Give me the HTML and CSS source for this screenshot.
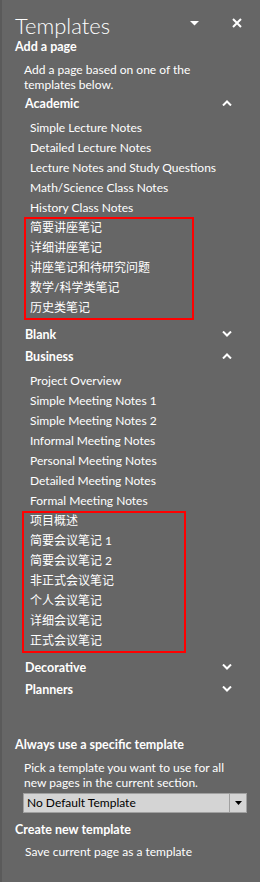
FILE: index.html
```html
<!DOCTYPE html>
<html lang="en">

<head>
    <meta charset="UTF-8">
    <meta name="viewport" content="width=device-width, initial-scale=1.0">
    <title>Templates</title>
    <link rel="stylesheet" href="styles.css">
</head>

<body>

    <div class="pane">
        <div class="pane-header">
            <div class="pane-title">Templates</div>
            <svg class="pane-menu" width="9" height="5" viewBox="0 0 9 5"><path d="M0 0H9L4.5 4.5Z" fill="#fff"/></svg>
            <svg class="pane-close" width="10" height="10" viewBox="0 0 10 10"><path d="M1 1L9 9M9 1L1 9" stroke="#fff" stroke-width="2"/></svg>
        </div>

        <div class="section-title">Add a page</div>
        <p class="section-text">Add a page based on one of the<br>templates below.</p>

        <!-- Academic -->
        <div class="group open">
            <div class="group-head">
                <span>Academic</span>
                <svg class="chevron" width="10" height="6" viewBox="0 0 10 6"><path d="M1 5.5L5 1.5L9 5.5" fill="none" stroke="#fff" stroke-width="2"/></svg>
            </div>
            <div class="group-items">
                <div class="item">Simple Lecture Notes</div>
                <div class="item">Detailed Lecture Notes</div>
                <div class="item">Lecture Notes and Study Questions</div>
                <div class="item">Math/Science Class Notes</div>
                <div class="item">History Class Notes</div>
                <div class="cjk-box box-academic">
                    <div class="item">简要讲座笔记</div>
                    <div class="item">详细讲座笔记</div>
                    <div class="item">讲座笔记和待研究问题</div>
                    <div class="item">数学/科学类笔记</div>
                    <div class="item">历史类笔记</div>
                </div>
            </div>
        </div>

        <div class="group">
            <div class="group-head">
                <span>Blank</span>
                <svg class="chevron" width="10" height="6" viewBox="0 0 10 6"><path d="M1 0.5L5 4.5L9 0.5" fill="none" stroke="#fff" stroke-width="2"/></svg>
            </div>
        </div>

        <!-- Business -->
        <div class="group open">
            <div class="group-head">
                <span>Business</span>
                <svg class="chevron" width="10" height="6" viewBox="0 0 10 6"><path d="M1 5.5L5 1.5L9 5.5" fill="none" stroke="#fff" stroke-width="2"/></svg>
            </div>
            <div class="group-items">
                <div class="item">Project Overview</div>
                <div class="item">Simple Meeting Notes 1</div>
                <div class="item">Simple Meeting Notes 2</div>
                <div class="item">Informal Meeting Notes</div>
                <div class="item">Personal Meeting Notes</div>
                <div class="item">Detailed Meeting Notes</div>
                <div class="item">Formal Meeting Notes</div>
                <div class="cjk-box box-business">
                    <div class="item">项目概述</div>
                    <div class="item">简要会议笔记 1</div>
                    <div class="item">简要会议笔记 2</div>
                    <div class="item">非正式会议笔记</div>
                    <div class="item">个人会议笔记</div>
                    <div class="item">详细会议笔记</div>
                    <div class="item">正式会议笔记</div>
                </div>
            </div>
        </div>

        <div class="group">
            <div class="group-head">
                <span>Decorative</span>
                <svg class="chevron" width="10" height="6" viewBox="0 0 10 6"><path d="M1 0.5L5 4.5L9 0.5" fill="none" stroke="#fff" stroke-width="2"/></svg>
            </div>
        </div>

        <div class="group">
            <div class="group-head">
                <span>Planners</span>
                <svg class="chevron" width="10" height="6" viewBox="0 0 10 6"><path d="M1 0.5L5 4.5L9 0.5" fill="none" stroke="#fff" stroke-width="2"/></svg>
            </div>
        </div>

        <div class="section-title default-title">Always use a specific template</div>
        <p class="section-text">Pick a template you want to use for all<br>new pages in the current section.</p>
        <div class="select">
            <div class="select-value">No Default Template</div>
            <div class="select-arrow">
                <svg width="7" height="4" viewBox="0 0 7 4"><path d="M0 0H7L3.5 4Z" fill="#000"/></svg>
            </div>
        </div>

        <div class="section-title create-title">Create new template</div>
        <div class="save-link">Save current page as a template</div>
    </div>

</body>

</html>
```

FILE: styles.css
```css
body {
    margin: 0;
    padding: 0;
    font-family: 'Lato', 'Noto Sans CJK SC', sans-serif;
    font-size: 12px;
    color: #fff;
    background-color: #666;
}

.pane {
    box-sizing: border-box;
    width: 260px;
    height: 882px;
    background-color: #666;
    border-left: 2px solid #5a5a5a;
}

.pane-header {
    display: flex;
    align-items: flex-start;
    padding: 12px 18px 0 13px;
}

.pane-title {
    flex: 1;
    font-size: 22px;
    font-weight: 300;
    line-height: 27px;
}

.pane-menu {
    margin-top: 9px;
}

.pane-close {
    margin-top: 6px;
    margin-left: 33px;
}

/* bold headings are a touch larger than the body text */
.section-title {
    padding-left: 13px;
    font-size: 12.5px;
    font-weight: bold;
    line-height: 16px;
}

.section-text {
    margin: 7px 0 0 0;
    padding-left: 22px;
    line-height: 15px;
}

.group-head {
    display: flex;
    align-items: center;
    justify-content: space-between;
    height: 22px;
    padding: 0 28px 0 23px;
    font-size: 12.5px;
    font-weight: bold;
}

.group-items {
    margin: 4px 0 5px 0;
}

.item {
    padding-left: 28px;
    line-height: 20px;
}

/* red highlight round the chinese rows */
.cjk-box {
    position: relative;
}

.cjk-box::after {
    content: '';
    position: absolute;
    border: 2px solid #f00;
    box-sizing: border-box;
}

.box-academic::after {
    top: -1px;
    bottom: -2px;
    left: 22px;
    width: 170px;
}

.box-business::after {
    top: 0;
    bottom: -2px;
    left: 20px;
    width: 164px;
}

.default-title {
    margin-top: 37px;
}

.select {
    display: flex;
    height: 20px;
    box-sizing: border-box;
    margin: 3px 13px 0 21px;
    border: 1px solid #a0a0a0;
    background-color: #d4d4d4;
    color: #000;
}

.select-value {
    flex: 1;
    padding-left: 3px;
    line-height: 18px;
}

.select-arrow {
    display: flex;
    align-items: center;
    justify-content: center;
    width: 16px;
    border-left: 1px solid #a0a0a0;
}

.create-title {
    margin-top: 9px;
}

.save-link {
    margin-top: 6px;
    padding-left: 23px;
    line-height: 16px;
}
```
